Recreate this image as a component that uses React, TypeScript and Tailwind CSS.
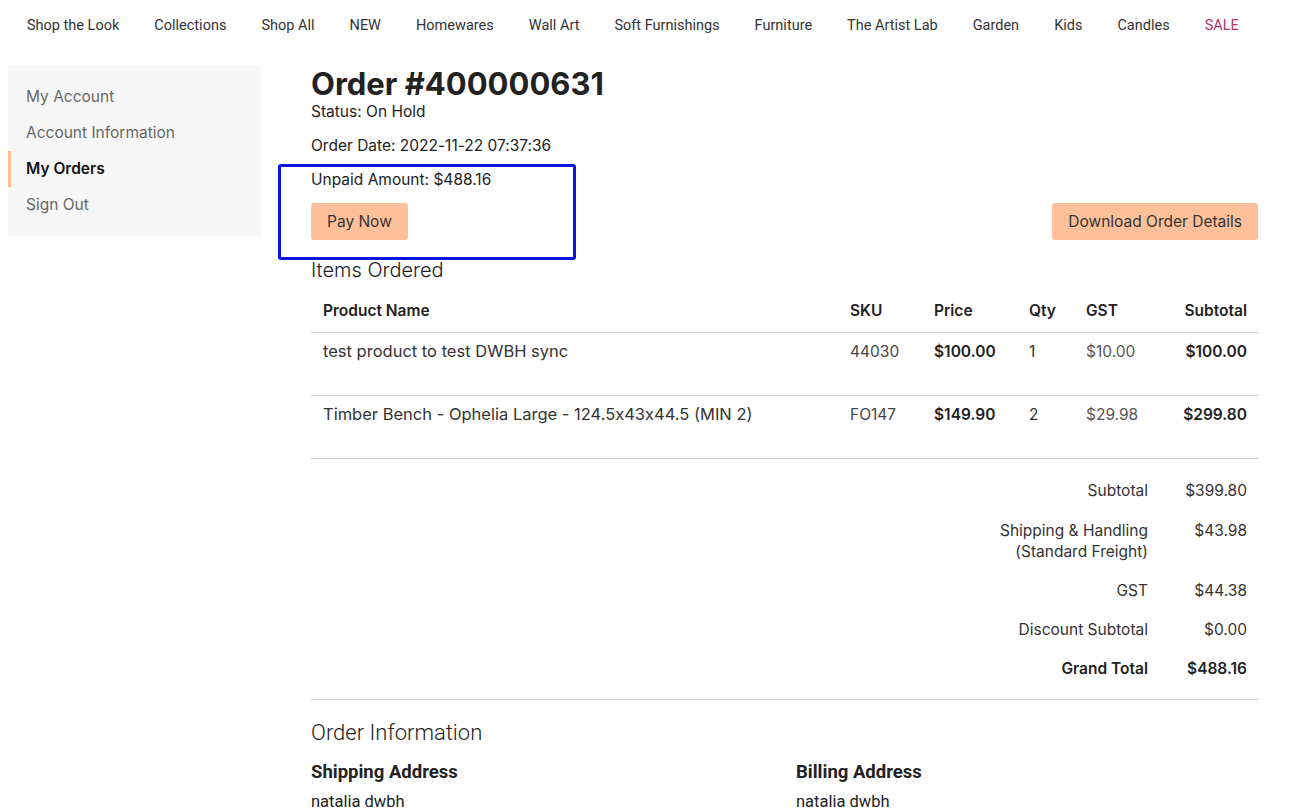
import React from "react";

const navItems = [
  "Shop the Look",
  "Collections",
  "Shop All",
  "NEW",
  "Homewares",
  "Wall Art",
  "Soft Furnishings",
  "Furniture",
  "The Artist Lab",
  "Garden",
  "Kids",
  "Candles",
];

const items = [
  { name: "test product to test DWBH sync", sku: "44030", price: "$100.00", qty: "1", gst: "$10.00", subtotal: "$100.00" },
  { name: "Timber Bench - Ophelia Large - 124.5x43x44.5 (MIN 2)", sku: "FO147", price: "$149.90", qty: "2", gst: "$29.98", subtotal: "$299.80" },
];

const totals = [
  { label: "Subtotal", value: "$399.80" },
  { label: "GST", value: "$44.38" },
  { label: "Discount Subtotal", value: "$0.00" },
];

const App = () => {
  return (
    <div className="min-h-screen bg-white text-[#222] font-['Inter',sans-serif] [font-feature-settings:'calt'_0]">
      {/* Top nav */}
      <nav className="flex h-[48px] items-center gap-[35px] pl-[27px] pt-[4px] font-['Roboto',sans-serif] text-[14.5px] text-[#333]">
        {navItems.map((n) => (
          <a key={n} className="whitespace-nowrap">{n}</a>
        ))}
        <a className="text-[#b3326b]">SALE</a>
      </nav>

      <div className="flex gap-[50px] pl-[8px] pt-[18px]">
        {/* Sidebar */}
        <aside className="h-[170px] w-[253px] shrink-0 bg-[#f7f7f7] py-[13px] text-[15.5px] text-[#666]">
          <ul className="flex flex-col">
            <li className="flex h-[36px] items-center pl-[18px]">My Account</li>
            <li className="flex h-[36px] items-center pl-[18px]">Account Information</li>
            <li className="flex h-[36px] items-center border-l-[3px] border-[#ffbf99] pl-[15px] font-semibold text-[#111]">My Orders</li>
            <li className="flex h-[35px] items-center pl-[18px]">Sign Out</li>
          </ul>
        </aside>

        {/* Main */}
        <main className="relative w-[947px]">
          <h1 className="text-[31px] font-bold leading-[36px] text-[#222]">Order #400000631</h1>
          <p className="text-[15.5px] leading-[20px]">Status: On Hold</p>
          <p className="mt-[14px] text-[15.5px] leading-[20px]">Order Date: 2022-11-22 07:37:36</p>
          <p className="mt-[14px] text-[15.5px] leading-[20px]">Unpaid Amount: $488.16</p>
          <div className="mt-[13px] flex items-center justify-between">
            <button className="h-[37px] rounded-[3px] bg-[#ffbf99] px-[16px] text-[15.5px] text-[#333]">Pay Now</button>
            <button className="h-[37px] rounded-[3px] bg-[#ffbf99] px-[16px] text-[15.5px] text-[#333]">Download Order Details</button>
          </div>

          {/* annotation box */}
          <div className="absolute left-[-33px] top-[98px] h-[96px] w-[298px] rounded-[3px] border-[3px] border-[#0a14e6]" />

          <h2 className="mt-[18px] text-[20px] font-light leading-[24px]">Items Ordered</h2>

          <table className="mt-[8px] w-full border-collapse text-[15.5px]">
            <thead>
              <tr className="h-[42px] border-b border-[#cccccc] text-left">
                <th className="pl-[12px] font-semibold">Product Name</th>
                <th className="w-[84px] font-semibold">SKU</th>
                <th className="w-[95px] font-semibold">Price</th>
                <th className="w-[57px] font-semibold">Qty</th>
                <th className="w-[70px] font-semibold">GST</th>
                <th className="w-[102px] pr-[11px] text-right font-semibold">Subtotal</th>
              </tr>
            </thead>
            <tbody>
              {items.map((it) => (
                <tr key={it.sku} className="h-[63px] border-b border-[#cccccc] align-top">
                  <td className="pl-[12px] pt-[6px] text-[16.5px] text-[#333]">{it.name}</td>
                  <td className="pt-[7px] text-[#444]">{it.sku}</td>
                  <td className="pt-[7px] font-semibold">{it.price}</td>
                  <td className="pt-[7px] text-[#333]">{it.qty}</td>
                  <td className="pt-[7px] text-[#555]">{it.gst}</td>
                  <td className="pr-[11px] pt-[7px] text-right font-semibold">{it.subtotal}</td>
                </tr>
              ))}
            </tbody>
          </table>

          {/* Totals */}
          <div className="flex flex-col items-end gap-[19px] border-b border-[#cccccc] pb-[20px] pr-[11px] pt-[22px] text-[15.5px] leading-[20px] text-[#333]">
            <div className="flex">
              <span className="text-right">{totals[0].label}</span>
              <span className="w-[99px] text-right">{totals[0].value}</span>
            </div>
            <div className="flex leading-[21px]">
              <span className="text-right">Shipping &amp; Handling<br />(Standard Freight)</span>
              <span className="w-[99px] text-right">$43.98</span>
            </div>
            {totals.slice(1).map((t) => (
              <div key={t.label} className="flex">
                <span className="text-right">{t.label}</span>
                <span className="w-[99px] text-right">{t.value}</span>
              </div>
            ))}
            <div className="flex font-semibold text-[#222]">
              <span className="text-right">Grand Total</span>
              <span className="w-[99px] text-right">$488.16</span>
            </div>
          </div>

          <h2 className="mt-[20px] font-['Roboto',sans-serif] text-[22px] font-light leading-[26px]">Order Information</h2>
          <div className="mt-[15px] flex font-['Roboto',sans-serif]">
            <div className="w-[485px]">
              <h3 className="text-[18.5px] font-bold leading-[22px]">Shipping Address</h3>
              <p className="mt-[9px] text-[16.5px] leading-[20px]">natalia dwbh</p>
            </div>
            <div>
              <h3 className="text-[18.5px] font-bold leading-[22px]">Billing Address</h3>
              <p className="mt-[9px] text-[16.5px] leading-[20px]">natalia dwbh</p>
            </div>
          </div>
        </main>
      </div>
    </div>
  );
};

export default App;
